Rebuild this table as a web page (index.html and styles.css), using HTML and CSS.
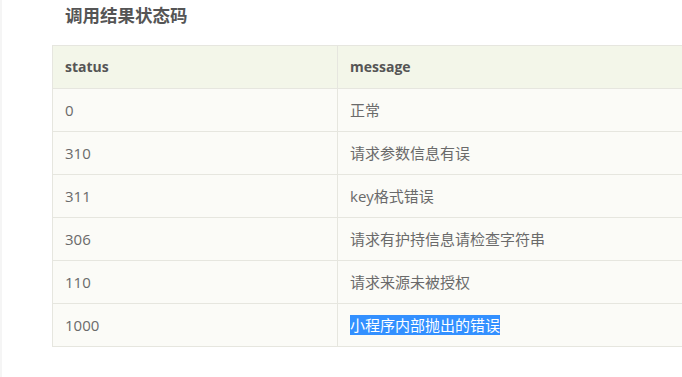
FILE: index.html
```html
<!DOCTYPE html>
<html lang="zh">
<head>
<meta charset="utf-8">
<link rel="stylesheet" href="styles.css">
</head>
<body>
<div class="page">
  <h3 class="title">调用结果状态码</h3>
  <div class="clip">
    <table class="codes">
      <thead>
        <tr><th class="c1">status</th><th>message</th></tr>
      </thead>
      <tbody>
        <tr><td>0</td><td>正常</td></tr>
        <tr><td>310</td><td>请求参数信息有误</td></tr>
        <tr><td>311</td><td>key格式错误</td></tr>
        <tr><td>306</td><td>请求有护持信息请检查字符串</td></tr>
        <tr><td>110</td><td>请求来源未被授权</td></tr>
        <tr><td>1000</td><td><span class="sel">小程序内部抛出的错误</span></td></tr>
      </tbody>
    </table>
  </div>
</div>
</body>
</html>
```
FILE: styles.css
```css
html, body {
  margin: 0;
  padding: 0;
  background: #ffffff;
}
body {
  font-family: "Open Sans", "Noto Sans CJK SC", sans-serif;
  overflow: hidden;
  width: 682px;
  height: 377px;
}
.page {
  border-left: 2px solid #f5f5f5;
  height: 377px;
  padding-left: 50px;
  box-sizing: border-box;
}
.title {
  margin: 0;
  padding: 2px 0 0 13px;
  height: 45px;
  box-sizing: border-box;
  font-family: "Noto Sans CJK SC", sans-serif;
  font-size: 17.5px;
  line-height: 26px;
  font-weight: bold;
  color: #555555;
}
.clip {
  width: 630px;
  overflow: hidden;
}
.codes {
  border-collapse: collapse;
  width: 720px;
  table-layout: fixed;
  font-size: 15px;
}
.codes th, .codes td {
  border: 1px solid #e6e6df;
  height: 43px;
  padding: 0 12px;
  text-align: left;
  box-sizing: border-box;
  line-height: 20px;
}
.codes th {
  background: #f3f6e9;
  color: #555555;
  font-weight: bold;
  font-size: 14px;
}
.codes th.c1 {
  width: 285px;
}
.codes td {
  background: #fbfbf7;
  color: #6a6a6a;
}
.sel {
  background: #3390ff;
  color: #ffffff;
}
```
